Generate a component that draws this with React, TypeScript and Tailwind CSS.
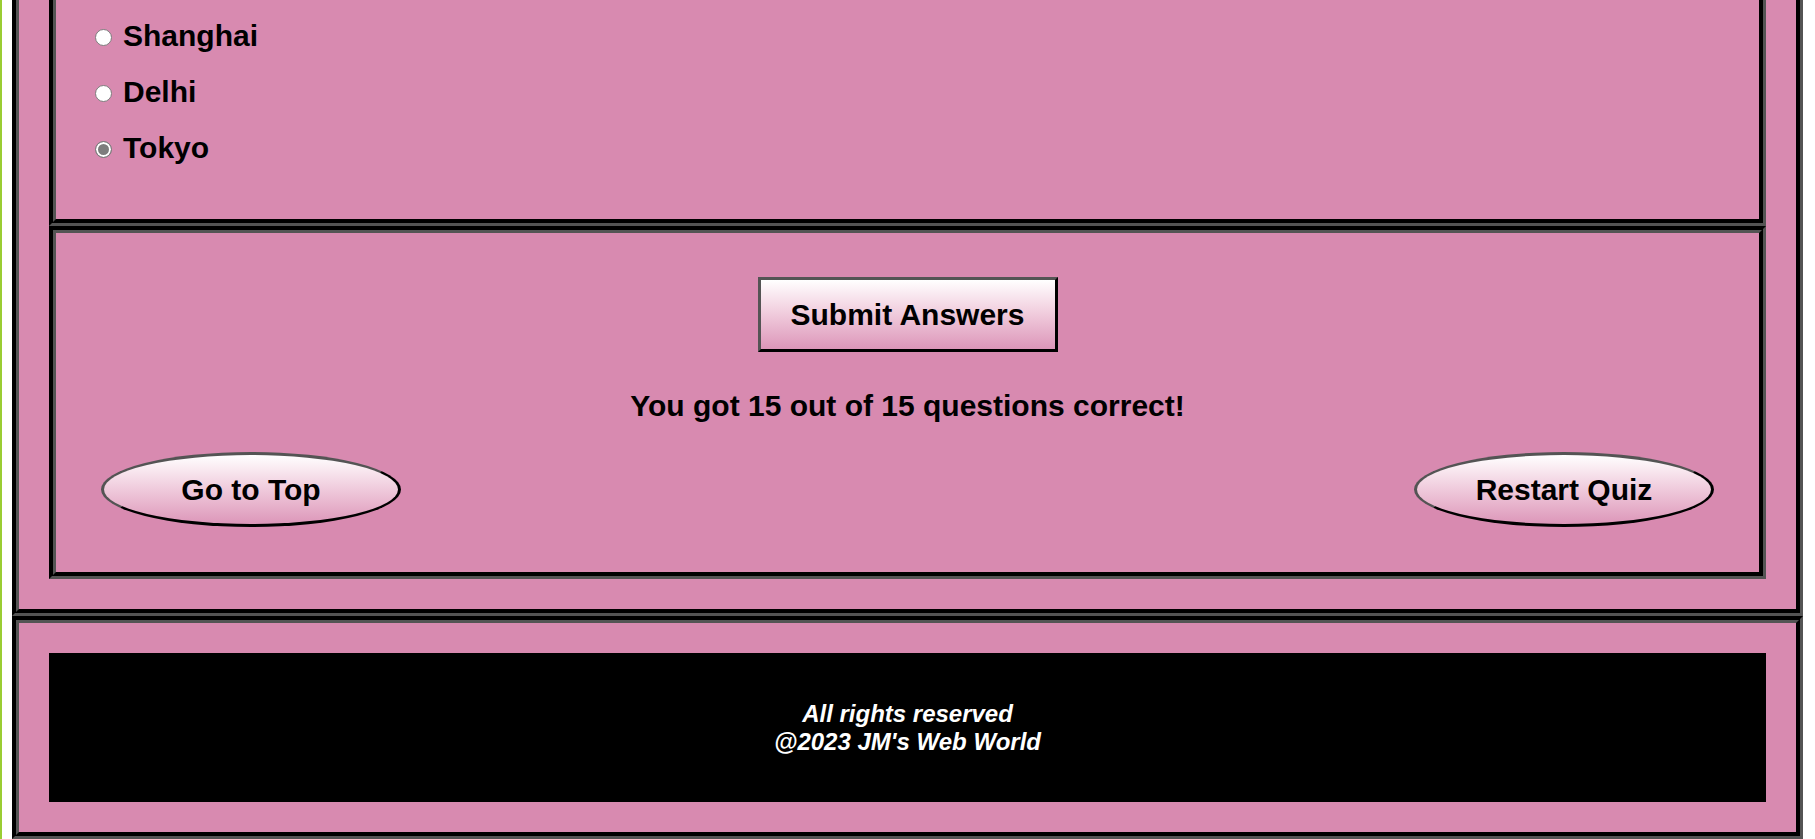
import React from "react";

const options = [
  { label: "Shanghai", checked: false },
  { label: "Delhi", checked: false },
  { label: "Tokyo", checked: true },
];

export default function App() {
  return (
    <div className="h-[839px] overflow-hidden bg-white border-l-2 border-[#9acd32] pl-[10px] pr-[12px] font-['Liberation_Sans',Arial,sans-serif] text-black">
      {/* quiz body, scrolled so only the last question shows */}
      <main className="bg-[#d88ab0] border-x-[7px] border-b-[7px] border-black [border-style:groove] px-[30px] pb-[30px]">
        <section className="border-x-[7px] border-b-[7px] border-black [border-style:groove] pl-[39px] pt-[19px] pb-[54px] flex flex-col gap-[22px]">
          {options.map((o) => (
            <label key={o.label} className="flex items-center gap-[11px] h-[34px] text-[30px] leading-[34px] font-bold">
              <input
                type="radio"
                name="q15"
                disabled
                defaultChecked={o.checked}
                className="appearance-none shrink-0 mt-[3px] w-[17px] h-[17px] rounded-full border border-[#7d7d7d] bg-white checked:bg-[#7d7d7d] checked:shadow-[inset_0_0_0_2px_#fff]"
              />
              <span>{o.label}</span>
            </label>
          ))}
        </section>

        <section className="border-[7px] border-black [border-style:groove] px-[45px] pt-[44px] pb-[45px] flex flex-col items-center">
          <button className="w-[300px] h-[75px] border-[3px] border-black [border-style:outset] bg-linear-to-b from-white to-[#dc96b9] text-[30px] font-bold">
            Submit Answers
          </button>
          <p className="mt-[37px] text-[30px] leading-[34px] font-bold">
            You got 15 out of 15 questions correct!
          </p>
          <div className="mt-[29px] w-full flex justify-between">
            <button className="w-[300px] h-[75px] rounded-[50%] border-[3px] border-black [border-style:outset] bg-linear-to-b from-white to-[#dc96b9] text-[30px] font-bold">
              Go to Top
            </button>
            <button className="w-[300px] h-[75px] rounded-[50%] border-[3px] border-black [border-style:outset] bg-linear-to-b from-white to-[#dc96b9] text-[30px] font-bold">
              Restart Quiz
            </button>
          </div>
        </section>
      </main>

      <footer className="bg-[#d88ab0] border-[7px] border-black [border-style:groove] p-[30px]">
        <div className="h-[149px] bg-black flex items-center justify-center text-center text-white italic font-bold text-[24px] leading-[27.6px]">
          <p>
            All rights reserved
            <br />
            @2023 JM's Web World
          </p>
        </div>
      </footer>
    </div>
  );
}
